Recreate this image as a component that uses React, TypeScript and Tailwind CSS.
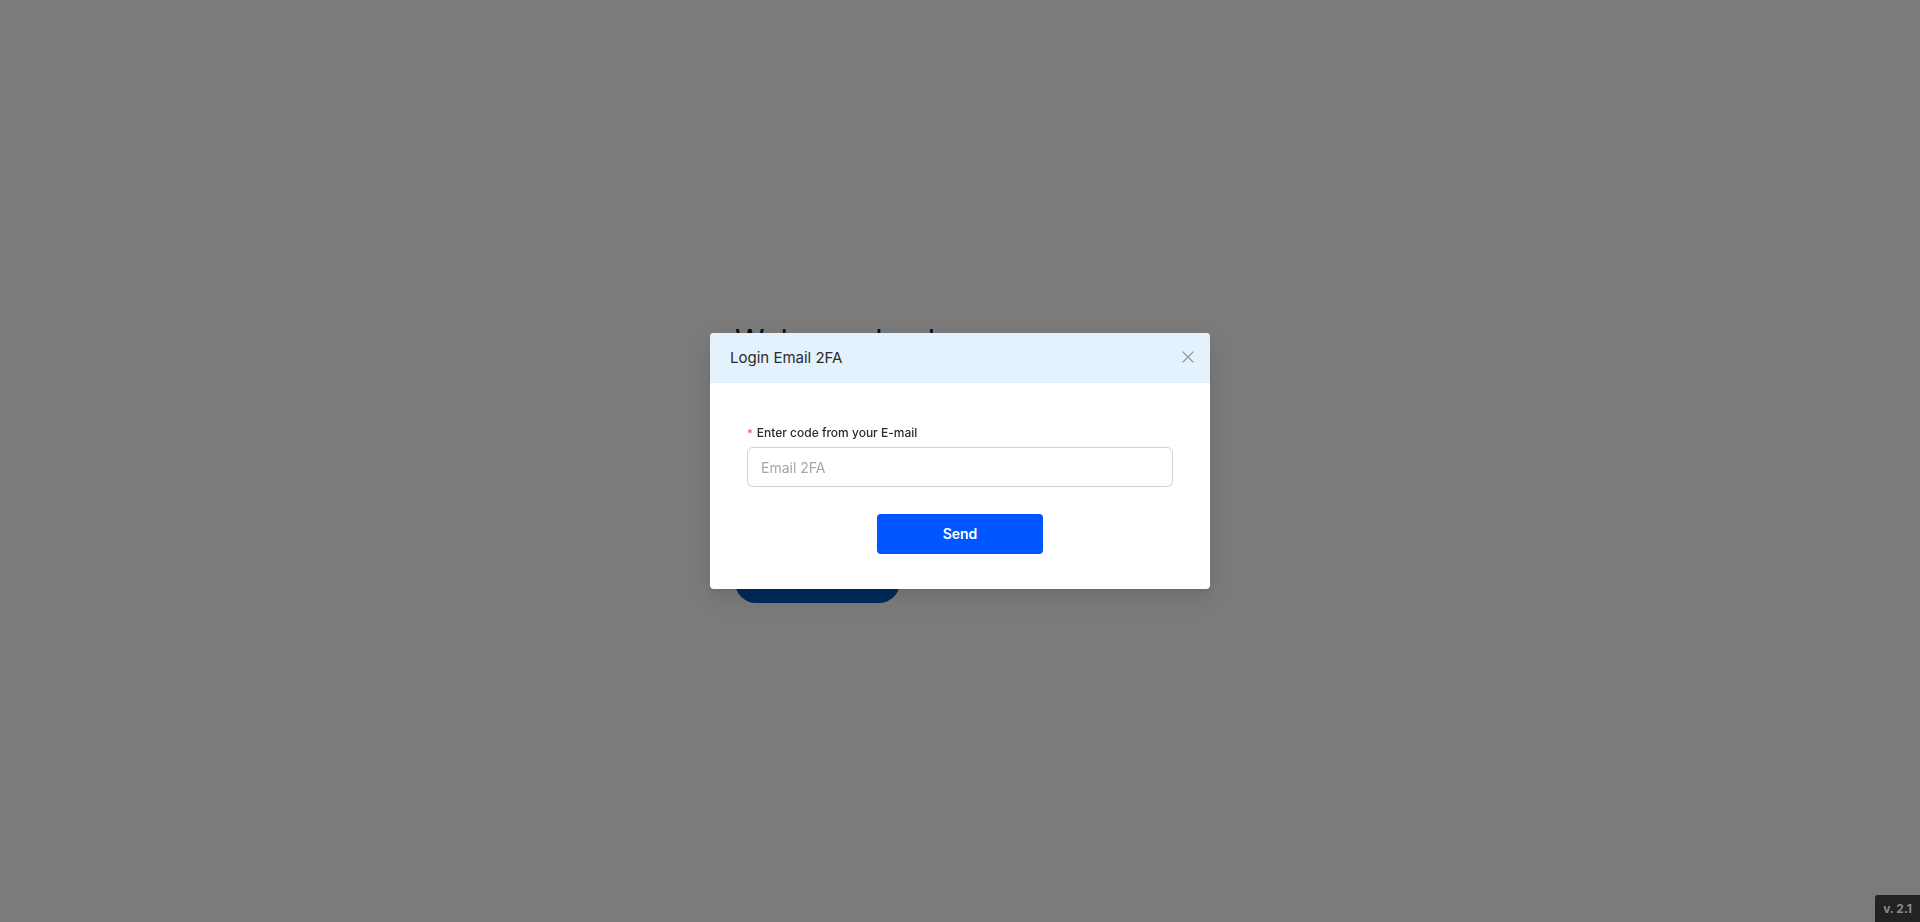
import { useState } from "react";

function CloseIcon() {
  return (
    <svg width="12" height="12" viewBox="0 0 12 12" fill="none" stroke="currentColor" strokeWidth="1.3" strokeLinecap="round">
      <path d="M1 1L11 11M11 1L1 11" />
    </svg>
  );
}

function App() {
  const [code, setCode] = useState("");

  return (
    <div className="relative min-h-screen w-full bg-[#f6f6f8] font-['Inter','Liberation_Sans',sans-serif] text-[#222] overflow-hidden">
      {/* Page behind the modal */}
      <div className="min-h-screen flex items-center justify-center">
        <div className="w-[450px] flex flex-col">
          <h1 className="text-[30px] leading-[40px] font-normal text-[#1b1b1b]">Welcome back</h1>
          <div className="mt-8 flex flex-col gap-4">
            <div className="h-10 rounded-md border border-gray-300 bg-white" />
            <div className="h-10 rounded-md border border-gray-300 bg-white" />
            <div className="h-5" />
          </div>
          <button aria-label="Log in" className="mt-[37px] w-[165px] h-[42px] rounded-full bg-[#0054b4]" />
        </div>
      </div>

      {/* Overlay */}
      <div className="fixed inset-0 bg-black/50" />

      {/* Modal */}
      <div className="fixed inset-0 flex items-center justify-center">
        <div className="w-[500px] rounded-[4px] bg-white overflow-hidden shadow-[0_6px_16px_0_rgba(0,0,0,0.08),0_3px_6px_-4px_rgba(0,0,0,0.12),0_9px_28px_8px_rgba(0,0,0,0.05)]">
          <div className="h-[50px] bg-[#e4f2fd] flex items-center justify-between pl-5 pr-[14px]">
            <span className="text-[15px] text-[#2b2b2b]">Login Email 2FA</span>
            <button className="text-[#999] p-0.5 -mt-0.5">
              <CloseIcon />
            </button>
          </div>
          <div className="px-[37px] pt-10 pb-[35px] flex flex-col">
            <label className="h-5 flex items-center text-xs font-medium text-[#2b2b2b] mb-1">
              <span className="text-[#ff4d4f] mr-1 text-[11px]">*</span>
              Enter code from your E-mail
            </label>
            <input
              value={code}
              onChange={(e) => setCode(e.target.value)}
              placeholder="Email 2FA"
              className="h-10 w-full rounded-[6px] border border-[#c9d3df] px-[13px] text-sm text-[#333] placeholder:text-[#a6a6a6] outline-none"
            />
            <div className="mt-[27px] flex justify-center">
              <button className="w-[166px] h-10 rounded-[4px] bg-[#0057ff] text-white text-sm font-semibold">
                Send
              </button>
            </div>
          </div>
        </div>
      </div>

      {/* Version badge */}
      <div className="fixed right-0 bottom-0 h-[27px] px-2 flex items-center bg-[#222] rounded-tl-[3px] text-xs font-bold text-[#8a8a8a]">
        v. 2.1
      </div>
    </div>
  );
}

export default App;
